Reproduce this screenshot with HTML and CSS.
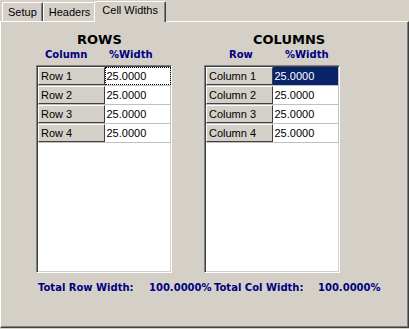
FILE: index.html
```html
<!DOCTYPE html>
<html>
<head>
  <title>Cell Widths</title>
  <link rel="stylesheet" href="styles.css">
</head>
<body>
  <div class="tabs">
    <div class="tab">Setup</div>
    <div class="tab">Headers</div>
    <div class="tab active">Cell Widths</div>
  </div>
  <div class="panel">
    <div class="sections">
      <div class="section">
        <div class="title rows-title">ROWS</div>
        <div class="labels">
          <span class="lbl rows-first">Column</span>
          <span class="lbl">%Width</span>
        </div>
        <div class="grid">
          <div class="row"><div class="head">Row 1</div><div class="val focus">25.0000</div></div>
          <div class="row"><div class="head">Row 2</div><div class="val">25.0000</div></div>
          <div class="row"><div class="head">Row 3</div><div class="val">25.0000</div></div>
          <div class="row"><div class="head">Row 4</div><div class="val">25.0000</div></div>
        </div>
      </div>
      <div class="section">
        <div class="title cols-title">COLUMNS</div>
        <div class="labels">
          <span class="lbl cols-first">Row</span>
          <span class="lbl">%Width</span>
        </div>
        <div class="grid">
          <div class="row"><div class="head">Column 1</div><div class="val selected">25.0000</div></div>
          <div class="row"><div class="head">Column 2</div><div class="val">25.0000</div></div>
          <div class="row"><div class="head">Column 3</div><div class="val">25.0000</div></div>
          <div class="row"><div class="head">Column 4</div><div class="val">25.0000</div></div>
        </div>
      </div>
    </div>
    <div class="totals">
      <span class="total-label">Total Row Width:</span>
      <span class="total-value">100.0000%</span>
      <span class="total-label col">Total Col Width:</span>
      <span class="total-value">100.0000%</span>
    </div>
  </div>
</body>
</html>
```

FILE: styles.css
```css
body {
  margin: 0;
  background-color: #d4d0c8;
  font: 11px "Liberation Sans", Arial, sans-serif;
  color: #000;
  width: 409px;
  height: 329px;
  overflow: hidden;
}

.tabs {
  display: flex;
  align-items: flex-end;
  height: 21px;
  padding-left: 2px;
}

.tab {
  height: 17px;
  padding: 1px 5px 0 5px;
  border: 1px solid #fff;
  border-bottom: none;
  border-right: 1px solid #404040;
  box-shadow: inset -1px 0 0 #808080;
  border-radius: 2px 2px 0 0;
  line-height: 16px;
}

.tab.active {
  height: 20px;
  margin-left: -2px;
  margin-bottom: -1px;
  padding: 0 7px 0 7px;
  background-color: #d4d0c8;
  position: relative;
  z-index: 1;
}

.panel {
  height: 305px;
  border: 1px solid #fff;
  border-right-color: #404040;
  border-bottom-color: #404040;
  box-shadow: inset -1px -1px 0 #808080;
}

.sections {
  display: flex;
  gap: 32px;
  padding: 10px 0 0 35px;
}

.section {
  width: 136px;
}

.title {
  font: bold 13px "DejaVu Sans", Verdana, sans-serif;
  line-height: 16px;
}

.rows-title {
  padding-left: 41px;
}

.cols-title {
  padding-left: 49px;
}

.labels {
  display: flex;
  height: 16px;
  padding-top: 1px;
  line-height: 14px;
  color: #000080;
  font: bold 10px "DejaVu Sans", Verdana, sans-serif;
}

.lbl.rows-first {
  padding-left: 9px;
  width: 64px;
}

.lbl.cols-first {
  padding-left: 25px;
  width: 56px;
}

.grid {
  height: 205px;
  background-color: #fff;
  border-top: 1px solid #808080;
  border-left: 1px solid #808080;
  border-right: 1px solid #fff;
  border-bottom: 1px solid #fff;
  box-shadow: inset 1px 1px 0 #404040, inset -1px -1px 0 #d4d0c8;
  padding: 1px 0 0 1px;
}

.row {
  display: flex;
  height: 18px;
  border-bottom: 1px solid #c0c0c0;
}

.head {
  width: 63px;
  padding-left: 2px;
  background-color: #d4d0c8;
  border-top: 1px solid #fff;
  border-left: 1px solid #fff;
  border-right: 1px solid #404040;
  border-bottom: 1px solid #404040;
  line-height: 16px;
  box-sizing: content-box;
  height: 16px;
}

.val {
  width: 64px;
  padding-left: 2px;
  line-height: 18px;
  border-right: 1px solid #c0c0c0;
}

.val.focus {
  outline: 1px dotted #000;
  outline-offset: -1px;
}

.val.selected {
  background-color: #0a246a;
  color: #fff;
}

.total-label,
.total-value {
  white-space: nowrap;
}

.totals {
  display: flex;
  padding: 8px 0 0 37px;
  color: #000080;
  font: bold 10px "DejaVu Sans", Verdana, sans-serif;
  line-height: 14px;
}

.total-label {
  width: 111px;
}

.total-label.col {
  width: 104px;
}

.total-value {
  width: 65px;
}
```
